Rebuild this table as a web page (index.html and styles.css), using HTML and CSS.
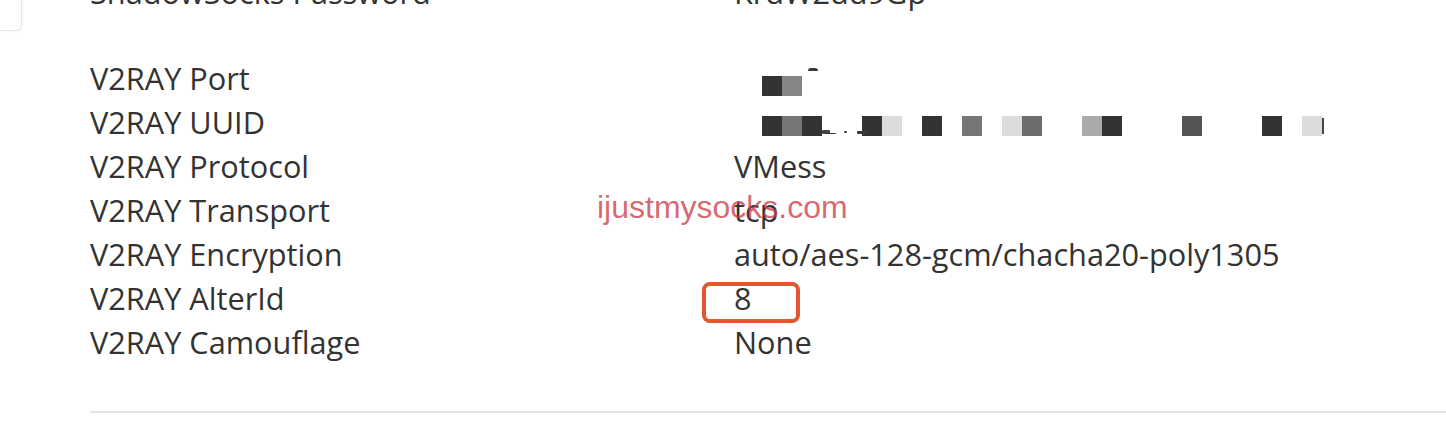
FILE: index.html
```html
<!DOCTYPE html>
<html lang="en">
<head>
<meta charset="utf-8">
<title>Service details</title>
<link rel="stylesheet" href="styles.css">
</head>
<body>
<div class="page">
  <aside class="aside">
    <div class="side-card"></div>
  </aside>
  <main class="main">
    <dl class="creds">
      <dt>ShadowSocks Password</dt><dd>KrdW2dd9Gp</dd>
    </dl>
    <dl class="creds creds-v2ray">
      <dt>V2RAY Port</dt>
      <dd>
        <div class="mosaic mosaic-port">
          <span class="px dark"></span><span class="px mid"></span>
          <span class="frag frag-port"></span>
        </div>
      </dd>
      <dt>V2RAY UUID</dt>
      <dd>
        <div class="mosaic mosaic-uuid">
          <span class="px dark"></span><span class="px grey"></span><span class="px dark"></span>
          <span class="px"></span><span class="px"></span>
          <span class="px dark"></span><span class="px light"></span><span class="px"></span>
          <span class="px dark"></span><span class="px"></span>
          <span class="px grey"></span><span class="px"></span>
          <span class="px light"></span><span class="px grey2"></span>
          <span class="px"></span><span class="px"></span>
          <span class="px silver"></span><span class="px dark"></span>
          <span class="px"></span><span class="px"></span><span class="px"></span>
          <span class="px slate"></span>
          <span class="px"></span><span class="px"></span><span class="px"></span>
          <span class="px dark"></span><span class="px"></span>
          <span class="px light"></span>
          <span class="bar"></span>
          <span class="frag frag-a"></span>
          <span class="frag frag-b"></span>
          <span class="frag frag-c"></span>
          <span class="frag frag-d"></span>
        </div>
      </dd>
      <dt>V2RAY Protocol</dt><dd>VMess</dd>
      <dt>V2RAY Transport</dt><dd>tcp</dd>
      <dt>V2RAY Encryption</dt><dd>auto/aes-128-gcm/chacha20-poly1305</dd>
      <dt>V2RAY AlterId</dt><dd>8</dd>
      <dt>V2RAY Camouflage</dt><dd>None</dd>
    </dl>
    <hr class="rule">
  </main>
  <div class="watermark">ijustmysocks.com</div>
  <div class="highlight"></div>
</div>
</body>
</html>
```

FILE: styles.css
```css
html, body {
  margin: 0;
  padding: 0;
  background: #ffffff;
}

body {
  width: 1446px;
  height: 422px;
  overflow: hidden;
  font-family: "Open Sans", "Noto Sans", sans-serif;
  color: #333333;
}

.page {
  position: relative;
  display: flex;
  height: 422px;
}

.aside {
  flex: none;
  width: 90px;
}

.side-card {
  width: 22px;
  height: 31px;
  box-sizing: border-box;
  border-right: 1px solid #e4e4e4;
  border-bottom: 1px solid #e4e4e4;
  border-bottom-right-radius: 6px;
  box-shadow: 1px 1px 2px rgba(0, 0, 0, 0.03);
}

.main {
  flex: 1;
  margin-top: -30px;
  min-width: 0;
}

.creds {
  display: grid;
  grid-template-columns: 644px 1fr;
  grid-auto-rows: 44px;
  margin: 0;
  font-size: 30.7px;
  line-height: 44px;
}

.creds dt,
.creds dd {
  margin: 0;
  white-space: nowrap;
}

.creds-v2ray {
  margin-top: 42px;
}

.mosaic {
  position: relative;
  display: flex;
  height: 20px;
  margin-left: 28px;
}

.mosaic-port {
  margin-top: 20px;
}

.mosaic-uuid {
  margin-top: 16px;
}

.px {
  flex: none;
  width: 20px;
  height: 20px;
}

.px.dark { background: #333333; }
.px.mid { background: #858585; }
.px.grey { background: #767676; }
.px.grey2 { background: #6d6d6d; }
.px.light { background: #dcdcdc; }
.px.silver { background: #aaaaaa; }
.px.slate { background: #555555; }

.bar {
  flex: none;
  width: 2px;
  height: 16px;
  margin-top: 2px;
  background: #444444;
}

.frag {
  position: absolute;
  background: #3a3a3a;
  border-radius: 1px;
}

.frag-port {
  left: 46px;
  top: -8px;
  width: 10px;
  height: 3px;
  border-radius: 3px 3px 0 0;
}

.frag-a {
  left: 60px;
  top: 14px;
  width: 8px;
  height: 4px;
  background: #444444;
}

.frag-b {
  left: 64px;
  top: 17px;
  width: 10px;
  height: 1px;
}

.frag-c {
  left: 82px;
  top: 15px;
  width: 3px;
  height: 2px;
}

.frag-d {
  left: 95px;
  top: 15px;
  width: 12px;
  height: 3px;
}

.rule {
  margin: 47px 0 0;
  border: 0;
  height: 2px;
  background: #e6e6e6;
}

.watermark {
  position: absolute;
  left: 597px;
  top: 191px;
  font-family: "Liberation Sans", Arial, sans-serif;
  font-size: 32px;
  line-height: 1;
  color: rgba(206, 62, 74, 0.78);
  white-space: nowrap;
  pointer-events: none;
}

.highlight {
  position: absolute;
  left: 702px;
  top: 282px;
  width: 98px;
  height: 41px;
  box-sizing: border-box;
  border: 4px solid #e4552c;
  border-radius: 8px;
  pointer-events: none;
}
```
